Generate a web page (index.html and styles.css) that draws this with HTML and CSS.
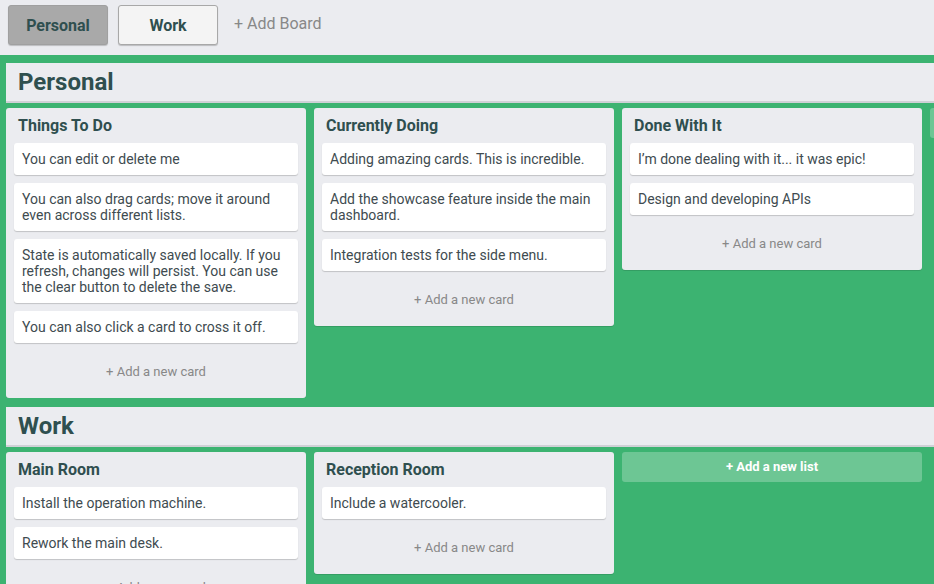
FILE: index.html
```html
<!DOCTYPE html>
<html>
<head>
<meta charset="utf-8">
<link rel="stylesheet" href="styles.css">
</head>
<body>
<header class="topbar">
  <button class="board-btn active">Personal</button>
  <button class="board-btn">Work</button>
  <span class="add-board">+ Add Board</span>
</header>
<main class="boards">
  <section class="board">
    <h1 class="board-title">Personal</h1>
    <div class="lists">
      <div class="list">
        <h2 class="list-title">Things To Do</h2>
        <div class="card">You can edit or delete me</div>
        <div class="card">You can also drag cards; move it around even across different lists.</div>
        <div class="card">State is automatically saved locally. If you refresh, changes will persist. You can use the clear button to delete the save.</div>
        <div class="card">You can also click a card to cross it off.</div>
        <div class="add-card">+ Add a new card</div>
      </div>
      <div class="list">
        <h2 class="list-title">Currently Doing</h2>
        <div class="card">Adding amazing cards. This is incredible.</div>
        <div class="card">Add the showcase feature inside the main dashboard.</div>
        <div class="card">Integration tests for the side menu.</div>
        <div class="add-card">+ Add a new card</div>
      </div>
      <div class="list">
        <h2 class="list-title">Done With It</h2>
        <div class="card">I’m done dealing with it... it was epic!</div>
        <div class="card">Design and developing APIs</div>
        <div class="add-card">+ Add a new card</div>
      </div>
      <div class="add-list">+ Add a new list</div>
    </div>
  </section>
  <section class="board">
    <h1 class="board-title">Work</h1>
    <div class="lists">
      <div class="list">
        <h2 class="list-title">Main Room</h2>
        <div class="card">Install the operation machine.</div>
        <div class="card">Rework the main desk.</div>
        <div class="add-card">+ Add a new card</div>
      </div>
      <div class="list">
        <h2 class="list-title">Reception Room</h2>
        <div class="card">Include a watercooler.</div>
        <div class="add-card">+ Add a new card</div>
      </div>
      <div class="add-list">+ Add a new list</div>
    </div>
  </section>
</main>
</body>
</html>
```

FILE: styles.css
```css
* { box-sizing: border-box; }
html, body {
  margin: 0;
  padding: 0;
  height: 100%;
  overflow: hidden;
}
body {
  font-family: Roboto, "Liberation Sans", Arial, sans-serif;
  color: #2f4f4f;
  background: #3cb371;
}
.topbar {
  height: 55px;
  background: #ebecf0;
  display: flex;
  align-items: flex-start;
  padding: 5px 8px 0;
  gap: 10px;
}
.board-btn {
  width: 100px;
  height: 40px;
  font-family: inherit;
  font-size: 16px;
  font-weight: 700;
  color: #2f4f4f;
  background: #f4f4f4;
  border: 1px solid #a8a8a8;
  border-radius: 3px;
  box-shadow: 0 1px 1px rgba(0,0,0,0.2);
  margin: 0;
}
.board-btn.active {
  background: #a9a9a9;
  border-color: #a0a0a0;
}
.add-board {
  margin-left: 6px;
  font-size: 16px;
  line-height: 38px;
  color: #888;
}
.boards {
  padding: 8px 0 0 6px;
}
.board {
  margin-bottom: 9px;
}
.board-title {
  margin: 0 0 7px 0;
  height: 38px;
  line-height: 38px;
  padding: 0 12px;
  font-size: 24px;
  font-weight: 700;
  background: #ebecf0;
  box-shadow: 0 2px 0 #cfd1d6;
  color: #2f4f4f;
}
.lists {
  display: flex;
  align-items: flex-start;
  gap: 8px;
  overflow: hidden;
}
.list {
  flex: 0 0 300px;
  background: #ebecf0;
  border-radius: 3px;
  padding: 8px 8px 7px;
  box-shadow: 0 1px 0 rgba(0,0,0,0.12);
}
.list-title {
  margin: 0 0 8px 0;
  padding: 0 4px;
  font-size: 16px;
  line-height: 19px;
  font-weight: 700;
  color: #2f4f4f;
}
.card {
  background: #fff;
  border-radius: 3px;
  padding: 8px;
  font-size: 14px;
  line-height: 16px;
  color: #404b50;
  margin-bottom: 8px;
  box-shadow: 0 1px 1px rgba(0,0,0,0.18);
}
.add-card {
  padding: 13px 12px 11px;
  text-align: center;
  font-size: 13px;
  line-height: 16px;
  color: #888;
}
.add-list {
  flex: 0 0 300px;
  height: 30px;
  line-height: 30px;
  text-align: center;
  background: rgba(255,255,255,0.25);
  border-radius: 3px;
  color: #fff;
  font-size: 13px;
  font-weight: 700;
}
```
